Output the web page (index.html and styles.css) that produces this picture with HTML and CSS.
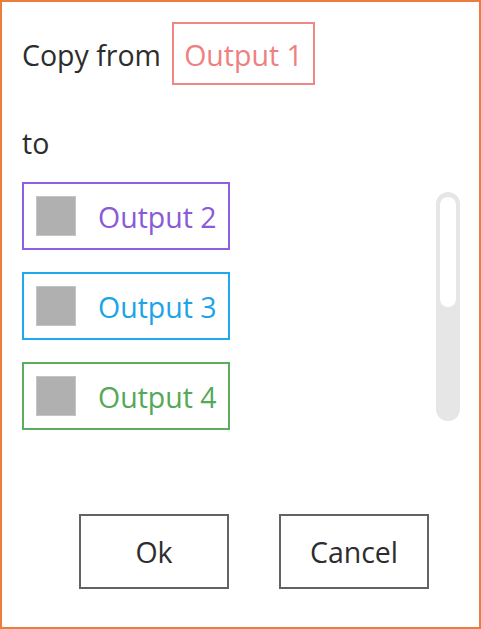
FILE: index.html
```html
<!DOCTYPE html>
<html>
<head>
<meta charset="utf-8">
<link rel="stylesheet" href="styles.css">
</head>
<body>
<div class="dialog">
  <div class="from-row">
    <span class="label">Copy from</span>
    <span class="source">Output 1</span>
  </div>
  <div class="to-label">to</div>
  <div class="list-area">
    <div class="list">
      <div class="item purple"><span class="check"></span><span class="name">Output 2</span></div>
      <div class="item blue"><span class="check"></span><span class="name">Output 3</span></div>
      <div class="item green"><span class="check"></span><span class="name">Output 4</span></div>
    </div>
    <div class="scrollbar"><div class="thumb"></div></div>
  </div>
  <div class="buttons">
    <button class="btn">Ok</button>
    <button class="btn">Cancel</button>
  </div>
</div>
</body>
</html>
```
FILE: styles.css
```css
* { box-sizing: border-box; }
html, body { margin: 0; padding: 0; background: #fff; }
body { font-family: "Open Sans", "Noto Sans", sans-serif; color: #2d2d2d; }
.dialog {
  width: 481px;
  height: 629px;
  border: 2px solid #ec7d3c;
  padding: 20px 19px 0 20px;
  display: flex;
  flex-direction: column;
}
.from-row {
  display: flex;
  align-items: center;
  gap: 11px;
  height: 63px;
}
.label, .to-label, .name, .source, .btn { font-size: 28.5px; letter-spacing: 0; }
.label, .source { padding-top: 2px; }
.source {
  width: 143px;
  height: 63px;
  border: 2px solid #f08787;
  color: #f08080;
  display: flex;
  align-items: center;
  justify-content: center;
}
.to-label {
  margin-top: 40px;
  height: 37px;
  line-height: 37px;
}
.list-area {
  margin-top: 20px;
  display: flex;
  justify-content: space-between;
  align-items: flex-start;
  height: 250px;
}
.list {
  display: flex;
  flex-direction: column;
  gap: 22px;
}
.item {
  width: 208px;
  height: 68px;
  border: 2px solid;
  display: flex;
  align-items: center;
  padding-left: 12px;
  gap: 22px;
}
.name { padding-top: 1px; }
.check {
  width: 40px;
  height: 40px;
  background: #b0b0b0;
  border: 1px solid #c4c4c4;
}
.purple { border-color: #8f5fe0; color: #8a5ad8; }
.blue { border-color: #1ea9ef; color: #1ba4e6; }
.green { border-color: #5aae5e; color: #55a857; }
.scrollbar {
  margin-top: 10px;
  width: 24px;
  height: 229px;
  background: #e6e6e6;
  border-radius: 12px;
  padding: 5px 4px;
}
.thumb {
  width: 16px;
  height: 110px;
  background: #fff;
  border-radius: 8px;
}
.buttons {
  margin-top: 82px;
  display: flex;
  justify-content: flex-end;
  gap: 50px;
  padding-right: 31px;
}
.btn {
  width: 150px;
  height: 75px;
  background: #fff;
  border: 2px solid #636363;
  font-family: "Open Sans", "Noto Sans", sans-serif;
  color: #2d2d2d;
  padding: 0;
}
```
